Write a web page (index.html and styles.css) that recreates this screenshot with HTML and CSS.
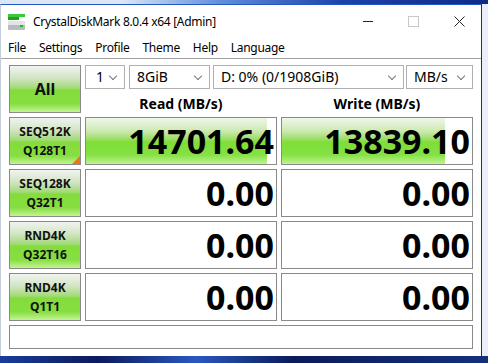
FILE: index.html
```html
<!DOCTYPE html>
<html lang="en">
<head>
  <meta charset="UTF-8">
  <title>CrystalDiskMark 8.0.4 x64 [Admin]</title>
  <link rel="stylesheet" href="styles.css">
</head>
<body>

  <div class="window">
    <div class="titlebar">
      <svg class="app-icon" width="18" height="16" viewBox="0 0 18 16">
        <rect x="0" y="0" width="17" height="3" fill="#3cc83c"/>
        <rect x="0" y="3" width="11" height="3" fill="#22a022"/>
        <rect x="0" y="7" width="17" height="9" rx="1" fill="#b8bcc0"/>
        <rect x="0" y="7" width="17" height="4" fill="#e2e4e6"/>
        <rect x="12" y="11" width="3" height="2" fill="#28b428"/>
      </svg>
      <span class="title">CrystalDiskMark 8.0.4 x64 [Admin]</span>
      <div class="caption-buttons">
        <span class="cap minimize"></span>
        <span class="cap maximize"></span>
        <svg class="cap close" width="11" height="11" viewBox="0 0 11 11">
          <path d="M0.5 0.5 L10.5 10.5 M10.5 0.5 L0.5 10.5" stroke="#222" stroke-width="1"/>
        </svg>
      </div>
    </div>

    <div class="menubar">
      <span>File</span>
      <span>Settings</span>
      <span>Profile</span>
      <span>Theme</span>
      <span>Help</span>
      <span>Language</span>
    </div>

    <div class="client">
      <div class="grid">
        <div class="btn all">All</div>
        <div class="top">
          <div class="selects">
            <div class="select s-count">1</div>
            <div class="select s-size">8GiB</div>
            <div class="select s-drive">D: 0% (0/1908GiB)</div>
            <div class="select s-unit">MB/s</div>
          </div>
          <div class="heads">
            <div>Read (MB/s)</div>
            <div>Write (MB/s)</div>
          </div>
        </div>

        <div class="btn label selected">SEQ512K<br>Q128T1</div>
        <div class="cell"><div class="bar" style="width: 95%"></div><span>14701.64</span></div>
        <div class="cell"><div class="bar" style="width: 86%"></div><span>13839.10</span></div>

        <div class="btn label">SEQ128K<br>Q32T1</div>
        <div class="cell"><span>0.00</span></div>
        <div class="cell"><span>0.00</span></div>

        <div class="btn label">RND4K<br>Q32T16</div>
        <div class="cell"><span>0.00</span></div>
        <div class="cell"><span>0.00</span></div>

        <div class="btn label">RND4K<br>Q1T1</div>
        <div class="cell"><span>0.00</span></div>
        <div class="cell"><span>0.00</span></div>

        <div class="comment"></div>
      </div>
    </div>
  </div>

</body>
</html>
```

FILE: styles.css
```css
body {
  margin: 0;
  width: 488px;
  height: 363px;
  overflow: hidden;
  font-family: "Noto Sans", "Open Sans", sans-serif;
  background:
    linear-gradient(to right, #dce7f5 0, #dce7f5 25%, #5f8fdc 45%, #1d43a8 70%, #0e2a86 100%) top / 100% 4px no-repeat,
    linear-gradient(to right, #1b3c9c 0, #0a1a5c 20%, #2a58c0 40%, #0b1b5a 60%, #14307e 100%) bottom / 100% 7px no-repeat,
    #e9eef7;
  padding-top: 4px;
  box-sizing: border-box;
}

.window {
  box-sizing: border-box;
  width: 482px;
  height: 352px;
  background-color: white;
  border-top: 1px solid #2556c8;
  border-right: 1px solid #12308c;
  border-left: 1px solid #c3ccd8;
  display: flex;
  flex-direction: column;
}

/* barre de titre */
.titlebar {
  height: 32px;
  flex-shrink: 0;
  display: flex;
  align-items: center;
  padding-left: 7px;
  font-size: 12px;
  color: #000;
}

.app-icon {
  margin-right: 7px;
  margin-top: 1px;
}

.title {
  flex: 1;
  letter-spacing: -0.3px;
}

.caption-buttons {
  display: flex;
  align-items: center;
}

.cap {
  display: block;
}

.minimize {
  width: 10px;
  height: 1px;
  background-color: #222;
  margin-right: 35px;
}

.maximize {
  width: 9px;
  height: 9px;
  border: 1px solid #c8c8c8;
  margin-right: 35px;
}

.close {
  margin-right: 16px;
}

/* menu */
.menubar {
  height: 21px;
  flex-shrink: 0;
  display: flex;
  align-items: center;
  padding-left: 7px;
  gap: 13px;
  font-size: 12px;
  letter-spacing: -0.3px;
  padding-bottom: 1px;
  box-sizing: border-box;
}

.client {
  flex: 1;
  border-top: 1px solid #a0a0a0;
  padding: 6px 0 0 8px;
}

.grid {
  display: grid;
  grid-template-columns: 72px 192px 192px;
  grid-template-rows: repeat(5, 48px) 24px;
  column-gap: 4px;
  row-gap: 4px;
}

/* boutons verts */
.btn {
  box-sizing: border-box;
  border: 1px solid #8a8a8a;
  background: linear-gradient(to bottom, #f1f3ef 0%, #d4e6c6 25%, #a3d97a 48%, #84dc3c 52%, #86de40 82%, #c4f494 100%);
  display: flex;
  align-items: center;
  justify-content: center;
  text-align: center;
  font-weight: bold;
  color: #111;
  position: relative;
}

.all {
  font-size: 16px;
}

.label {
  font-size: 12px;
  line-height: 19px;
}

.selected::after {
  content: "";
  position: absolute;
  right: 0;
  bottom: 0;
  border-style: solid;
  border-width: 0 0 8px 8px;
  border-color: transparent transparent #f07418 transparent;
}

/* en-tête */
.top {
  grid-column: 2 / 4;
  display: flex;
  flex-direction: column;
}

.selects {
  display: flex;
  height: 24px;
}

.select {
  box-sizing: border-box;
  height: 24px;
  border: 1px solid #b0b0b0;
  font-size: 14px;
  line-height: 21px;
  padding-left: 10px;
  position: relative;
}

.select::after {
  content: "";
  position: absolute;
  right: 8px;
  top: 7px;
  width: 5px;
  height: 5px;
  border-right: 1px solid #777;
  border-bottom: 1px solid #777;
  transform: rotate(45deg);
}

.s-count {
  width: 40px;
  margin-right: 4px;
}

.s-size {
  width: 81px;
  margin-right: 3px;
  padding-left: 7px;
}

.s-drive {
  width: 191px;
  margin-right: 2px;
  padding-left: 7px;
}

.s-unit {
  width: 67px;
  padding-left: 7px;
}

.heads {
  display: grid;
  grid-template-columns: 192px 192px;
  column-gap: 4px;
  flex: 1;
  font-size: 14px;
  font-weight: bold;
  text-align: center;
  padding-top: 7px;
  line-height: 16px;
}

/* valeurs */
.cell {
  box-sizing: border-box;
  border: 1px solid #8a8a8a;
  position: relative;
  display: flex;
  align-items: center;
  justify-content: flex-end;
  padding-right: 2px;
  font-size: 34px;
  font-weight: bold;
  color: #000;
}

.cell span {
  position: relative;
}

.bar {
  position: absolute;
  left: 0;
  top: 0;
  bottom: 0;
  background: linear-gradient(to bottom, #f0f6ea 0%, #cdeab2 28%, #98dd60 47%, #7ede36 52%, #86e044 80%, #c0f492 100%);
}

.comment {
  grid-column: 1 / 4;
  box-sizing: border-box;
  border: 1px solid #8a8a8a;
}
```
